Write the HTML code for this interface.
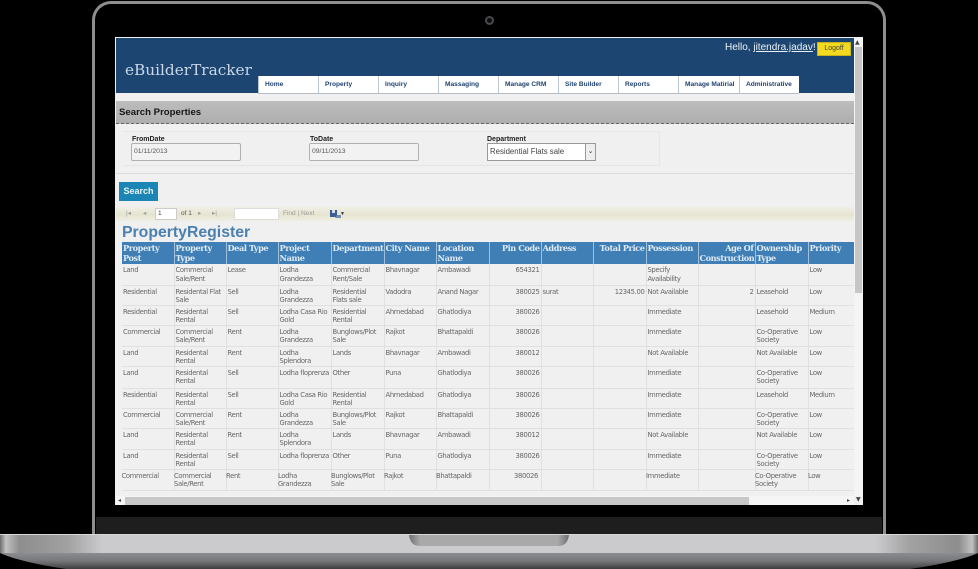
<!DOCTYPE html>
<html><head><meta charset="utf-8"><style>
html,body{margin:0;padding:0;background:#000;width:978px;height:569px;overflow:hidden}
body{position:relative;font-family:"Liberation Sans",sans-serif}
.a{position:absolute;box-sizing:border-box}
#frame{left:92px;top:1px;width:794px;height:540px;border:3px solid #8e8e8e;border-bottom:0;border-radius:19px 19px 0 0;background:#000}
#screen{left:115px;top:37px;width:748px;height:468px;background:#f0f0f0;overflow:hidden;filter:blur(.35px)}
#header{left:1px;top:1px;width:738px;height:55px;background:#1c4571}
.tab{position:absolute;top:38px;height:18px;width:60px;background:#fff;border-left:1px solid #b9c6d2;border-bottom:1px solid #b5bcc5;box-sizing:border-box;font:bold 6.6px/18px "Liberation Sans",sans-serif;color:#1f4270;padding-left:6px;white-space:nowrap}
#logo{left:9px;top:23px;font:15.3px/18px "DejaVu Serif",serif;color:#c9d7e6;white-space:nowrap}
#hello{left:609px;top:3px;font:10px/13px "Liberation Sans",sans-serif;color:#eef2f6;white-space:nowrap}
#hello u{text-decoration:underline}
#logoff{left:701px;top:4px;width:34px;height:14px;background:#f3d91f;border:1px solid #c9b21a;font:7px/12px "Liberation Sans",sans-serif;color:#444;text-align:center}
#sp{left:1px;top:64px;width:738px;height:23px;background:linear-gradient(#bdbdbd,#aeaeae);border-bottom:1px dashed #666;font:bold 9.6px/23px "Liberation Sans",sans-serif;color:#151515;padding-left:3px}
#panel{left:1px;top:87px;width:738px;height:50px;border-bottom:1px solid #dcdcdc}
#fbox{left:8px;top:94px;width:537px;height:35px;border:1px solid #e6e6e6;border-left:0}
.lb{font:bold 7px/9px "Liberation Sans",sans-serif;color:#222;white-space:nowrap;top:98px}
.in{top:106px;height:18px;background:#f2f2f2;border:1px solid #b0b0b0;border-radius:2px;font:6.8px/16px "Liberation Sans",sans-serif;color:#555;padding-left:2px}
#sel{left:372px;top:106px;width:109px;height:18px;background:#fff;border:1px solid #999;font:7.8px/16px "Liberation Sans",sans-serif;color:#444;padding-left:2px}
#sel i{position:absolute;right:0;top:0;width:9px;height:16px;background:#eee;border-left:1px solid #999;font:normal 7px/15px "DejaVu Sans",sans-serif;color:#333;text-align:center}
#btn{left:4px;top:145px;width:39px;height:19px;background:#1b86b5;font:bold 9px/19px "Liberation Sans",sans-serif;color:#e8f4f8;text-align:center}
#tb{left:1px;top:170px;width:738px;height:14px;background:linear-gradient(#f0efe6,#e6e4d0 55%,#efeee4)}
.tt{position:absolute;top:0;font:6.5px/14px "Liberation Sans",sans-serif;color:#9a9a9a;white-space:nowrap}
#title{left:7px;top:186px;font:bold 15.8px/19px "Liberation Sans",sans-serif;color:#4a80b2;white-space:nowrap}
#grid{left:7px;top:205px;width:732px}
table{border-collapse:collapse;table-layout:fixed;width:732px}
th{background:#3f7fb6;color:#dfeaf4;font:bold 8.2px/9.5px "DejaVu Serif",serif;letter-spacing:-.42px;text-align:left;vertical-align:top;padding:2px 1px 0;border-right:1px solid #9fc0da;box-sizing:border-box;overflow:hidden;white-space:nowrap}
td{font:6.8px/8.5px "DejaVu Sans",sans-serif;letter-spacing:-.33px;color:#666;text-align:left;vertical-align:top;padding:2px 1px 0;border-right:1px solid #e0e0e0;border-bottom:1px solid #e0e0e0;box-sizing:border-box;overflow:hidden;white-space:nowrap}
.r{text-align:right}
tr.l td{transform:translateX(-1.5px)}
#sbv{left:739px;top:1px;width:9px;height:458px;background:#f4f4f4}
#sbvt{left:740px;top:10px;width:7px;height:246px;background:#c6c6c6}
#sbh{left:1px;top:459px;width:738px;height:9px;background:#f5f5f5}
#sbht{left:10px;top:460px;width:624px;height:8px;background:#c8c8c8}
.ar{position:absolute;font:6px/8px "DejaVu Sans",sans-serif;color:#444}
</style></head><body>
<div class="a" id="frame"></div>
<div class="a" style="left:485px;top:16px;width:9px;height:9px;border-radius:50%;border:2px solid #4a4a4a;background:#0a0a14"></div>
<div class="a" style="left:96px;top:517px;width:786px;height:17px;background:#1e1e1e"></div>
<div class="a" id="screen">
 <div class="a" id="header">
  <div class="a" id="logo">eBuilderTracker</div>
  <div class="a" id="hello">Hello, <u>jitendra.jadav</u>!</div>
  <div class="a" id="logoff">Logoff</div>
  <div class="tab" style="left:142px">Home</div>
  <div class="tab" style="left:202px">Property</div>
  <div class="tab" style="left:262px">Inquiry</div>
  <div class="tab" style="left:322px">Massaging</div>
  <div class="tab" style="left:382px">Manage CRM</div>
  <div class="tab" style="left:442px">Site Builder</div>
  <div class="tab" style="left:502px">Reports</div>
  <div class="tab" style="left:562px;width:61px">Manage Matirial</div>
  <div class="tab" style="left:623px">Administrative</div>
 </div>
 <div class="a" id="sp">Search Properties</div>
 <div class="a" id="panel"></div>
 <div class="a" id="fbox"></div>
 <div class="a lb" style="left:17px">FromDate</div>
 <div class="a in" style="left:16px;width:110px">01/11/2013</div>
 <div class="a lb" style="left:195px">ToDate</div>
 <div class="a in" style="left:194px;width:110px">09/11/2013</div>
 <div class="a lb" style="left:372px">Department</div>
 <div class="a" id="sel">Residential Flats sale<i>&#8964;</i></div>
 <div class="a" id="btn">Search</div>
 <div class="a" id="tb">
  <span class="tt" style="left:10px">|&#9666;</span>
  <span class="tt" style="left:27px">&#9666;</span>
  <span class="a" style="left:39px;top:1px;width:22px;height:12px;background:#fff;border:1px solid #ccc;font:6.5px/10px 'Liberation Sans',sans-serif;color:#444;padding-left:2px">1</span>
  <span class="tt" style="left:65px;color:#555">of 1</span>
  <span class="tt" style="left:82px">&#9656;</span>
  <span class="tt" style="left:96px">&#9656;|</span>
  <span class="a" style="left:118px;top:1px;width:45px;height:12px;background:#fff;border:1px solid #ddd"></span>
  <span class="tt" style="left:167px">Find | Next</span>
  <svg class="a" style="left:213px;top:2px" width="14" height="10"><rect x="1" y="1" width="7" height="7" fill="#3c5f96"/><rect x="3" y="1" width="3" height="3" fill="#d5deea"/><path d="M8 6h4v3H6z" fill="#6f8fb5"/></svg>
  <span class="tt" style="left:224px;color:#333;font-size:5px">&#9660;</span>
 </div>
 <div class="a" id="title">PropertyRegister</div>
 <div class="a" id="grid"><table>
 <colgroup><col style="width:52px"><col style="width:52px"><col style="width:52px"><col style="width:53px"><col style="width:53px"><col style="width:52px"><col style="width:53px"><col style="width:52px"><col style="width:52px"><col style="width:53px"><col style="width:52px"><col style="width:57px"><col style="width:53px"><col style="width:46px"></colgroup>
 <tr style="height:22px"><th>Property<br>Post</th><th>Property<br>Type</th><th>Deal Type</th><th>Project<br>Name</th><th>Department</th><th>City Name</th><th>Location<br>Name</th><th class="r">Pin Code</th><th>Address</th><th class="r">Total Price</th><th>Possession</th><th class="r">Age Of<br>Construction</th><th>Ownership<br>Type</th><th style="border-right:0">Priority</th></tr>
 <tr style="height:21px"><td>Land</td><td>Commercial<br>Sale/Rent</td><td>Lease</td><td>Lodha<br>Grandezza</td><td>Commercial<br>Rent/Sale</td><td>Bhavnagar</td><td>Ambawadi</td><td class="r">654321</td><td></td><td></td><td>Specify<br>Availability</td><td></td><td></td><td>Low</td></tr>
 <tr style="height:20px"><td>Residential</td><td>Residental Flat<br>Sale</td><td>Sell</td><td>Lodha<br>Grandezza</td><td>Residential<br>Flats sale</td><td>Vadodra</td><td>Anand Nagar</td><td class="r">380025</td><td>surat</td><td class="r">12345.00</td><td>Not Available</td><td class="r">2</td><td>Leasehold</td><td>Low</td></tr>
 <tr style="height:20px"><td>Residential</td><td>Residental<br>Rental</td><td>Sell</td><td>Lodha Casa Rio<br>Gold</td><td>Residential<br>Rental</td><td>Ahmedabad</td><td>Ghatlodiya</td><td class="r">380026</td><td></td><td></td><td>Immediate</td><td></td><td>Leasehold</td><td>Medium</td></tr>
 <tr style="height:21px"><td>Commercial</td><td>Commercial<br>Sale/Rent</td><td>Rent</td><td>Lodha<br>Grandezza</td><td>Bunglows/Plot<br>Sale</td><td>Rajkot</td><td>Bhattapaldi</td><td class="r">380026</td><td></td><td></td><td>Immediate</td><td></td><td>Co-Operative<br>Society</td><td>Low</td></tr>
 <tr style="height:20px"><td>Land</td><td>Residental<br>Rental</td><td>Rent</td><td>Lodha<br>Splendora</td><td>Lands</td><td>Bhavnagar</td><td>Ambawadi</td><td class="r">380012</td><td></td><td></td><td>Not Available</td><td></td><td>Not Available</td><td>Low</td></tr>
 <tr style="height:22px"><td>Land</td><td>Residental<br>Rental</td><td>Sell</td><td>Lodha floprenza</td><td>Other</td><td>Puna</td><td>Ghatlodiya</td><td class="r">380026</td><td></td><td></td><td>Immediate</td><td></td><td>Co-Operative<br>Society</td><td>Low</td></tr>
 <tr style="height:20px"><td>Residential</td><td>Residental<br>Rental</td><td>Sell</td><td>Lodha Casa Rio<br>Gold</td><td>Residential<br>Rental</td><td>Ahmedabad</td><td>Ghatlodiya</td><td class="r">380026</td><td></td><td></td><td>Immediate</td><td></td><td>Leasehold</td><td>Medium</td></tr>
 <tr style="height:20px"><td>Commercial</td><td>Commercial<br>Sale/Rent</td><td>Rent</td><td>Lodha<br>Grandezza</td><td>Bunglows/Plot<br>Sale</td><td>Rajkot</td><td>Bhattapaldi</td><td class="r">380026</td><td></td><td></td><td>Immediate</td><td></td><td>Co-Operative<br>Society</td><td>Low</td></tr>
 <tr style="height:21px"><td>Land</td><td>Residental<br>Rental</td><td>Rent</td><td>Lodha<br>Splendora</td><td>Lands</td><td>Bhavnagar</td><td>Ambawadi</td><td class="r">380012</td><td></td><td></td><td>Not Available</td><td></td><td>Not Available</td><td>Low</td></tr>
 <tr style="height:20px"><td>Land</td><td>Residental<br>Rental</td><td>Sell</td><td>Lodha floprenza</td><td>Other</td><td>Puna</td><td>Ghatlodiya</td><td class="r">380026</td><td></td><td></td><td>Immediate</td><td></td><td>Co-Operative<br>Society</td><td>Low</td></tr>
 <tr class="l" style="height:21px"><td>Commercial</td><td>Commercial<br>Sale/Rent</td><td>Rent</td><td>Lodha<br>Grandezza</td><td>Bunglows/Plot<br>Sale</td><td>Rajkot</td><td>Bhattapaldi</td><td class="r">380026</td><td></td><td></td><td>Immediate</td><td></td><td>Co-Operative<br>Society</td><td>Low</td></tr>
 </table></div>
 <div class="a" id="sbv"><span class="ar" style="left:1px;top:1px">&#9650;</span></div>
 <div class="a" id="sbvt"></div>
 <div class="a" id="sbh"><span class="ar" style="left:2px;top:1px">&#9666;</span><span class="ar" style="left:731px;top:1px">&#9656;</span></div>
 <div class="a" id="sbht"></div>
 <span class="ar" style="left:741px;top:459px">&#9660;</span>
</div>
<svg class="a" style="left:0;top:534px" width="978" height="35" viewBox="0 0 978 35">
 <defs>
  <linearGradient id="b" x1="0" x2="1" y1="0" y2="0">
   <stop offset="0" stop-color="#6d6d6d"/><stop offset=".006" stop-color="#c2c2c2"/><stop offset=".02" stop-color="#8d8d8d"/><stop offset=".07" stop-color="#a2a2a2"/><stop offset=".105" stop-color="#cbcbce"/>
   <stop offset=".895" stop-color="#cbcbce"/><stop offset=".93" stop-color="#a2a2a2"/><stop offset=".98" stop-color="#8d8d8d"/><stop offset=".994" stop-color="#c2c2c2"/><stop offset="1" stop-color="#6d6d6d"/>
  </linearGradient>
  <linearGradient id="c" x1="0" x2="0" y1="0" y2="1"><stop offset="0" stop-color="#8b8c90"/><stop offset=".5" stop-color="#76777a"/><stop offset="1" stop-color="#3c3c3e"/></linearGradient>
  <linearGradient id="n" x1="0" x2="1" y1="0" y2="0"><stop offset="0" stop-color="#6f6f6f"/><stop offset=".07" stop-color="#a9a9a9"/><stop offset=".93" stop-color="#a9a9a9"/><stop offset="1" stop-color="#6f6f6f"/></linearGradient>
 </defs>
 <rect x="0" y="0" width="978" height="1" fill="#d8d8d8"/>
 <rect x="0" y="1" width="978" height="18" fill="url(#b)"/>
 <path d="M0 19H978C960 27 930 32 910 35H66C46 32 18 27 0 19Z" fill="url(#c)"/>
 <path d="M409 1H569C568 8 565 12 558 12H420C413 12 410 8 409 1Z" fill="url(#n)"/>
</svg>
</body></html>
